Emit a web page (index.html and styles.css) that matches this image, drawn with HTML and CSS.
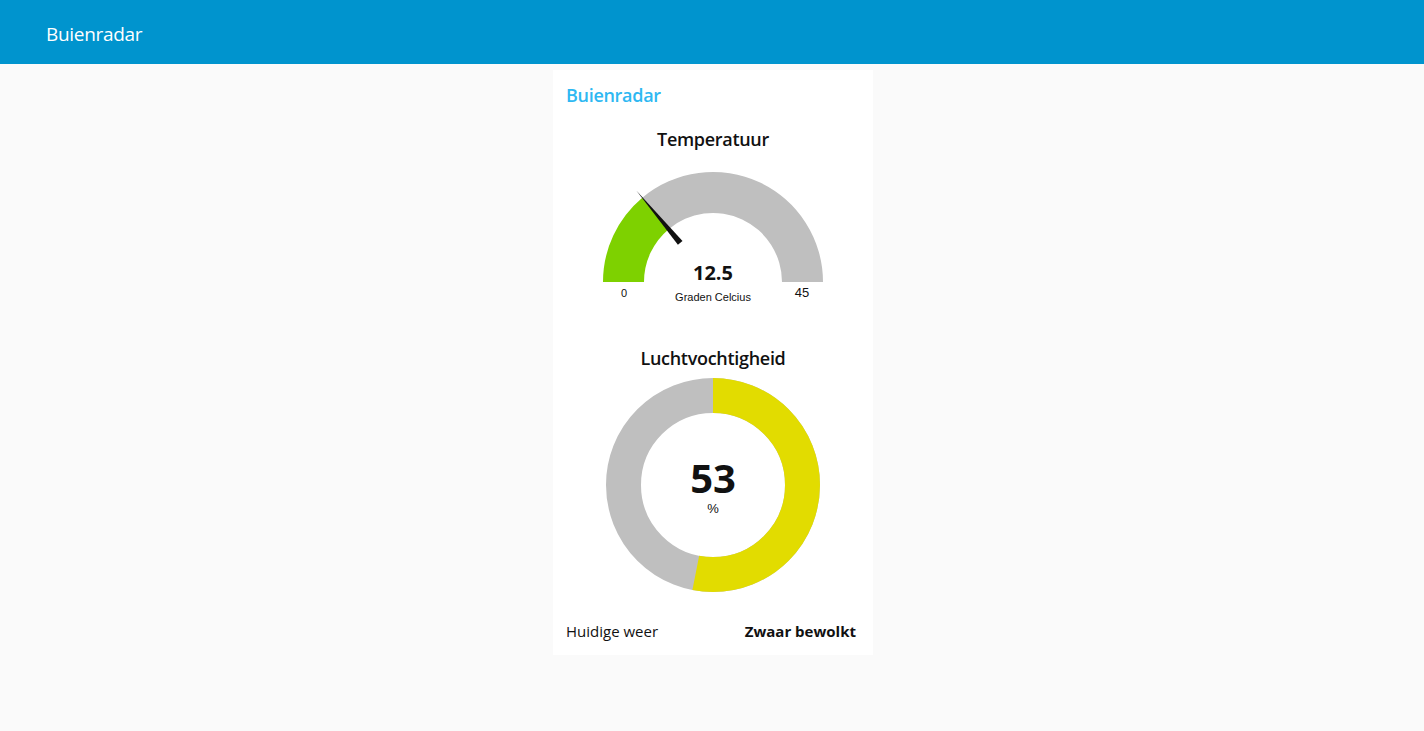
FILE: index.html
```html
<!DOCTYPE html>
<html>
<head>
<meta charset="utf-8">
<link rel="stylesheet" href="styles.css">
</head>
<body>
<header class="topbar"><span class="brand">Buienradar</span></header>
<main class="main">
  <section class="card">
    <h2 class="card-title">Buienradar</h2>
    <div class="widget">
      <h3 class="widget-title">Temperatuur</h3>
      <svg class="gauge" width="240" height="140" viewBox="0 0 240 140">
        <path d="M10 112 A110 110 0 0 1 49.3 27.7 L75.65 59.14 A69 69 0 0 0 51 112 Z" fill="#7ed100"/>
        <path d="M49.3 27.7 A110 110 0 0 1 230 112 L189 112 A69 69 0 0 0 75.65 59.14 Z" fill="#bfbfbf"/>
        <polygon points="43.5,20.8 89.5,71.0 84.9,74.8" fill="#111"/>
        <text x="120" y="110" class="g-value" text-anchor="middle">12.5</text>
        <text x="31" y="127" class="g-min" text-anchor="middle">0</text>
        <text x="120" y="131" class="g-unit" text-anchor="middle">Graden Celcius</text>
        <text x="209" y="127" class="g-max" text-anchor="middle">45</text>
      </svg>
    </div>
    <div class="widget widget-donut">
      <h3 class="widget-title">Luchtvochtigheid</h3>
      <svg class="donut" width="220" height="220" viewBox="0 0 220 220">
        <circle cx="110" cy="110" r="89.5" fill="none" stroke="#bfbfbf" stroke-width="35"/>
        <circle cx="110" cy="110" r="89.5" fill="none" stroke="#e2dc00" stroke-width="35" stroke-dasharray="298.04 600" transform="rotate(-90 110 110)"/>
        <text x="110" y="118" class="d-value" text-anchor="middle">53</text>
        <text x="110" y="138" class="d-unit" text-anchor="middle">%</text>
      </svg>
    </div>
    <div class="row">
      <span class="row-label">Huidige weer</span>
      <span class="row-value">Zwaar bewolkt</span>
    </div>
  </section>
</main>
</body>
</html>
```
FILE: styles.css
```css
* { box-sizing: border-box; }
html, body { margin: 0; padding: 0; }
body {
  background: #fafafa;
  font-family: "Open Sans", "Noto Sans", sans-serif;
  color: #111;
  width: 1424px;
  height: 731px;
  overflow: hidden;
}
.topbar {
  height: 64px;
  background: #0094ce;
  display: flex;
  align-items: center;
  padding-left: 46px;
  padding-top: 4px;
}
.brand {
  color: #fff;
  font-size: 19px;
  letter-spacing: -0.3px;
}
.main {
  display: flex;
  justify-content: center;
  padding-top: 6px;
  padding-left: 2px;
}
.card {
  width: 320px;
  height: 585px;
  background: #fff;
  padding: 12px 0 0;
  display: flex;
  flex-direction: column;
}
.card-title {
  margin: 0 17px 0 13px;
  font-size: 18px;
  font-weight: 600;
  color: #2eb8f2;
  line-height: 26px;
  letter-spacing: -0.3px;
}
.widget {
  display: flex;
  flex-direction: column;
  align-items: center;
}
.widget-title {
  margin: 18px 0 0;
  font-size: 18px;
  font-weight: 600;
  line-height: 26px;
  letter-spacing: -0.3px;
  color: #111;
}
.gauge {
  display: block;
  margin-top: 18px;
}
.widget-donut .widget-title { margin-top: 35px; }
.donut {
  display: block;
  margin-top: 4px;
}
.g-value {
  font-family: "Open Sans", sans-serif;
  font-size: 20px;
  font-weight: 700;
  fill: #111;
}
.g-min {
  font-family: "Liberation Sans", Arial, sans-serif;
  font-size: 11px;
  fill: #111;
}
.g-unit {
  font-family: "Liberation Sans", Arial, sans-serif;
  font-size: 11px;
  fill: #111;
}
.g-max {
  font-family: "Liberation Sans", Arial, sans-serif;
  font-size: 13px;
  fill: #111;
}
.d-value {
  font-family: "Open Sans", sans-serif;
  font-size: 40px;
  font-weight: 700;
  fill: #111;
}
.d-unit {
  font-family: "Liberation Sans", Arial, sans-serif;
  font-size: 13px;
  fill: #111;
}
.row {
  display: flex;
  justify-content: space-between;
  align-items: center;
  margin: 25px 17px 0 13px;
  font-size: 15px;
  line-height: 22px;
}
.row-label { color: #111; }
.row-value { font-weight: 700; }
```
